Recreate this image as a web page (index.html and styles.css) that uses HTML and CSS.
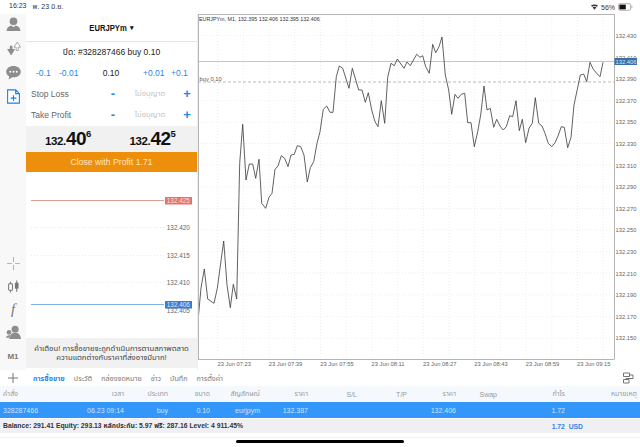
FILE: index.html
```html
<!DOCTYPE html>
<html lang="th">
<head>
<meta charset="utf-8">
<title>EURJPYm</title>
<link rel="stylesheet" href="styles.css">
</head>
<body>
<div class="app">
  <header class="status">
    <div class="status-left"><span>16:23</span><span>พ. 23 มิ.ย.</span></div>
    <div class="status-right">
      <svg class="wifi" viewBox="0 0 10 8" width="7" height="6"><path d="M0 2 Q5 -1 10 2 L8.6 3.6 Q5 1.6 1.4 3.6Z M2.2 4.5 Q5 3 7.800 4.500 L5 8Z" fill="#333"/></svg>
      <span>56%</span>
      <svg class="battery" viewBox="0 0 16 8" width="15" height="8"><rect x=".5" y=".5" width="13" height="7" rx="1.500" fill="#fff" stroke="#aaa"/><rect x="1.500" y="1.500" width="6.800" height="5" fill="#111"/><rect x="14.300" y="2.700" width="1" height="2.600" fill="#aaa"/></svg>
    </div>
  </header>

  <main class="main">
    <nav class="side">
      <div class="side-top">
        <svg class="ico" viewBox="0 0 14 14"><circle cx="7" cy="4" r="3.600" fill="#8d8d8d"/><path d="M.5 13 Q1 8.800 5 8 L7 9.500 L9 8 Q13 8.800 13.500 13Z" fill="#8d8d8d"/></svg>
        <svg class="ico" viewBox="0 0 14 14"><path d="M1 7.500 H3.500 V4.500 H6 V7.500 H8.500 L4.800 13.500Z" fill="#8d8d8d"/><path d="M7.500 5.800 L10.500 1 L13.500 5.800 H11.500 V8.800 H9.500 V5.800Z" fill="#fff" stroke="#9a9a9a" stroke-width=".8"/></svg>
        <svg class="ico" viewBox="0 0 14 14"><path d="M7 1 C10.800 1 13.800 3.200 13.800 6.300 S10.800 11.500 7 11.500 L5.800 11.500 L2.500 13.500 L3 10.600 C1.200 9.700 .2 8.100 .2 6.300 C.2 3.200 3.200 1 7 1Z" fill="#8d8d8d"/><circle cx="4" cy="6.300" r=".9" fill="#fff"/><circle cx="7" cy="6.300" r=".9" fill="#fff"/><circle cx="10" cy="6.300" r=".9" fill="#fff"/></svg>
        <svg class="ico" viewBox="0 0 14 14"><path d="M1.500 .8 H9 L12.500 4.300 V13.200 H1.500Z M9 .8 V4.300 H12.500" fill="#fff" stroke="#1c7fe6" stroke-width="1"/><path d="M7 5.800 V11.200 M4.300 8.500 H9.700" stroke="#1c7fe6" stroke-width="1"/></svg>
      </div>
      <div class="side-bottom">
        <svg class="ico" viewBox="0 0 14 14"><path d="M7 1 V5.500 M7 8.500 V13 M1 7 H5.500 M8.500 7 H13" stroke="#b4b4b4" stroke-width="1"/></svg>
        <svg class="ico" viewBox="0 0 14 14"><rect x="2.500" y="4.500" width="3.500" height="6" rx=".8" fill="#fff" stroke="#777"/><path d="M4.200 2.500 V4.500 M4.200 10.500 V12.500 M10 1.500 V12" stroke="#777"/><rect x="8.300" y="3.500" width="3.400" height="5.500" fill="#777"/></svg>
        <span class="ico-f">f</span>
        <svg class="ico" viewBox="0 0 14 14"><circle cx="8.500" cy="4" r="3.300" fill="#8d8d8d"/><path d="M3 13 Q3.500 8.500 6.500 7.500 H10.500 Q13.500 8.500 14 13Z" fill="#8d8d8d"/><circle cx="2.800" cy="6.800" r="2.200" fill="#8d8d8d"/><path d="M0 12 Q.2 9.800 2.500 9.500 H4 L3 12Z" fill="#8d8d8d"/></svg>
        <span class="ico-m">M1</span>
      </div>
    </nav>

    <section class="panel">
      <div class="panel-title"><span class="title-text">EURJPYm</span> <span class="caret">▾</span></div>
      <div class="panel-close">ปิด: #328287466 buy 0.10</div>
      <div class="steps">
        <span class="step">-0.1</span>
        <span class="step">-0.01</span>
        <span class="vol">0.10</span>
        <span class="step">+0.01</span>
        <span class="step">+0.1</span>
      </div>
      <div class="level"><span class="level-name">Stop Loss</span><span class="adj">-</span><span class="level-val">ไม่อนุญาต</span><span class="adj">+</span></div>
      <div class="level"><span class="level-name">Take Profit</span><span class="adj">-</span><span class="level-val">ไม่อนุญาต</span><span class="adj">+</span></div>
      <div class="quotes">
        <div class="quote">132.<b>40</b><sup>6</sup></div>
        <div class="quote">132.<b>42</b><sup>5</sup></div>
      </div>
      <button class="close-btn">Close with Profit 1.71</button>
      <svg class="mini" viewBox="26 172 171 166">
        <path class="mini-grid" d="M31 227.500H164 M31 255.500H164 M31 282.500H164"/>
        <path d="M31 200.500H164" stroke="#d9a090" stroke-width="1"/>
        <path d="M31 304.500H164" stroke="#7fb0e8" stroke-width="1"/>
        <rect x="165" y="197" width="27" height="7.500" fill="#e5736a"/>
        <text class="mini-tag" x="166.800" y="203">132.425</text>
        <text class="mini-lbl" x="166.800" y="230.200">132.420</text>
        <text class="mini-lbl" x="166.800" y="258.200">132.415</text>
        <text class="mini-lbl" x="166.800" y="285.200">132.410</text>
        <text class="mini-lbl" x="166.800" y="312.700">132.405</text>
        <rect x="165" y="301" width="27" height="7.500" fill="#2f7fdc"/>
        <text class="mini-tag" x="166.800" y="307">132.406</text>
      </svg>
      <div class="warn">คำเตือน! การซื้อขายจะถูกดำเนินการตามสภาพตลาด<br>ความแตกต่างกับราคาที่ส่งอาจมีมาก!</div>
    </section>

    <svg class="chart" viewBox="198 14 442 356">
      <path class="grid" d="M217.700 14V359 M243.400 14V359 M269.100 14V359 M294.800 14V359 M320.500 14V359 M346.200 14V359 M371.900 14V359 M397.600 14V359 M423.300 14V359 M449 14V359 M474.700 14V359 M500.400 14V359 M526.100 14V359 M551.800 14V359 M577.500 14V359 M603.200 14V359
      M198 35.500H614 M198 100.500H614 M198 122H614 M198 143.500H614 M198 165H614 M198 187H614 M198 208.500H614 M198 230H614 M198 252H614 M198 273H614 M198 295H614 M198 316.500H614 M198 338H614"/>
      <path d="M198 61.500H614" stroke="#c4c4c4" stroke-width="1"/>
      <path d="M198 82H614" stroke="#aaa" stroke-width=".8" stroke-dasharray="3 2"/>
      <polyline class="price" points="198.300,317.700 201,288 204.300,269 207.700,299 214,303.300 217.300,288.300 223.700,241 227,285 230.300,307.700 233.300,284.300 236.700,299 239.700,163.300 242.700,124.300 246,180 249.300,164 252.700,164 255.700,178.300 259,159.300 261.700,203.300 265.700,208.300 269,197.300 272,193.300 275,169.300 278,166 281.300,155.700 284.700,158.300 288,166.700 291,155 294.300,154.300 297.300,145.700 300.700,146.700 304,155 307.300,182 310.300,167.700 313.700,161.700 317,143.300 320,131.700 323.300,109.300 326.700,106 330,112.300 333,112.300 336.300,76.700 339.300,66 342.700,68.300 349,88.300 352.300,68.300 358.700,90 362,90 365.300,102.300 368.300,92.700 371.700,110 375,121.700 378,126.700 381.300,100.700 384.700,123.300 387.700,77.300 391,63.300 394.300,65.700 397.300,59 404,68.300 407,62 410.300,65.700 416.700,54.300 420,57.300 422.700,55.700 425.700,66.700 429.300,73.300 432.700,44.300 435.700,52.700 439,46.700 442,37 445.300,75 448.700,90 451.700,114.300 455,94.300 458,98.300 461.300,94.300 464.700,93.300 467.700,122.700 471,122.700 474.300,146.700 477.700,131.700 480.700,115 484,86 487,110 490.300,108.300 493.700,127.300 496.700,119.300 500,126 503.300,130 506.300,126.700 509.700,115.700 512.700,116.700 516,100.700 519.300,130.700 522.300,119.300 525.700,142.700 529,128.300 532.300,123.300 535.300,97.700 538.700,123.300 542,126 545,133.300 548.300,143.300 551.700,146.700 555,142.700 558,136 561.300,126.700 564.300,127.300 567.700,147.700 571,137.300 574,105 577.300,89.300 580.300,75 583.700,74 586.700,81.700 590,62.300 593.300,69.300 596.700,73.300 600,76.700 603,62.300"/>
      <path d="M198.500 14V359 M198 14.500H614.500 M614.500 14V359 M198 359.500H614.500" stroke="#b4b4b4" stroke-width="1" fill="none"/>
      <text class="chart-title" x="199" y="20.500">EURJPYm, M1, 132.395 132.406 132.395 132.406</text>
      <text class="chart-buy" x="199.500" y="81">buy 0.10</text>
      <text class="axis" x="615.500" y="38">132.430</text>
      <text class="axis" x="615.500" y="59.500">132.410</text>
      <text class="axis" x="615.500" y="81">132.390</text>
      <text class="axis" x="615.500" y="102.700">132.370</text>
      <text class="axis" x="615.500" y="124.300">132.350</text>
      <text class="axis" x="615.500" y="146">132.330</text>
      <text class="axis" x="615.500" y="167.500">132.310</text>
      <text class="axis" x="615.500" y="189.200">132.290</text>
      <text class="axis" x="615.500" y="210.800">132.270</text>
      <text class="axis" x="615.500" y="232.400">132.250</text>
      <text class="axis" x="615.500" y="254">132.230</text>
      <text class="axis" x="615.500" y="275.500">132.210</text>
      <text class="axis" x="615.500" y="297">132.190</text>
      <text class="axis" x="615.500" y="318.700">132.170</text>
      <text class="axis" x="615.500" y="340.300">132.150</text>
      <rect x="614.500" y="58" width="22.500" height="7" fill="#3a6ea8"/>
      <text class="axis-tag" x="615.500" y="64">132.406</text>
      <text class="time" x="217.500" y="365.500">23 Jun 07:23</text>
      <text class="time" x="268.800" y="365.500">23 Jun 07:39</text>
      <text class="time" x="320.200" y="365.500">23 Jun 07:55</text>
      <text class="time" x="371.500" y="365.500">23 Jun 08:11</text>
      <text class="time" x="423" y="365.500">23 Jun 08:27</text>
      <text class="time" x="474.300" y="365.500">23 Jun 08:43</text>
      <text class="time" x="525.700" y="365.500">23 Jun 08:59</text>
      <text class="time" x="577" y="365.500">23 Jun 09:15</text>
    </svg>
  </main>

  <div class="toolbar">
    <svg class="tool-plus" viewBox="0 0 12 12" width="12" height="12"><path d="M6 1V11 M1 6H11" stroke="#777" stroke-width="1"/></svg>
    <div class="tabs">
      <span class="tab active">การซื้อขาย</span>
      <span class="tab">ประวัติ</span>
      <span class="tab">กล่องจดหมาย</span>
      <span class="tab">ข่าว</span>
      <span class="tab">บันทึก</span>
      <span class="tab">การตั้งค่า</span>
    </div>
    <svg class="tool-split" viewBox="0 0 12 12" width="12" height="12"><path d="M1.500 1H7.500V4.500H1.500Z M1.500 7.500H7V11H1.500Z M7.500 3H11V6.500H4V7.500" fill="none" stroke="#666" stroke-width=".9"/></svg>
  </div>

  <div class="row head">
    <span class="left">คำสั่ง</span><span>เวลา</span><span>ประเภท</span><span>ขนาด</span><span>สัญลักษณ์</span><span>ราคา</span><span>S/L</span><span>T/P</span><span>ราคา</span><span>Swap</span><span>กำไร</span><span>หมายเหตุ</span>
  </div>
  <div class="row trade">
    <span class="left">328287466</span><span>06.23 09:14</span><span>buy</span><span>0.10</span><span>eurjpym</span><span>132.387</span><span></span><span></span><span>132.406</span><span></span><span>1.72</span><span></span>
  </div>
  <div class="balance">
    <span>Balance: 291.41 Equity: 293.13 หลักประกัน: 5.97 ฟรี: 287.16 Level: 4 911.45%</span>
    <span class="total">1.72&nbsp; USD</span>
  </div>
  <div class="home"><div class="home-bar"></div></div>
</div>
</body>
</html>
```
FILE: styles.css
```css
* { box-sizing: border-box; }
html, body { margin: 0; padding: 0; background: #fff; }
body { font-family: "Liberation Sans", "Noto Sans Thai", "Noto Sans", sans-serif; overflow: hidden; }
.app { width: 640px; height: 447px; display: flex; flex-direction: column; }

.status { height: 14px; display: flex; justify-content: space-between; align-items: center; padding: 0 7px 0 9px; font-size: 7px; color: #333; }
.status-left { display: flex; gap: 6px; }
.status-right { display: flex; align-items: center; gap: 3px; }

.main { height: 356px; display: grid; grid-template-columns: 26px 172px 442px; }
.side { background: #f8f8f8; display: flex; flex-direction: column; justify-content: space-between; align-items: center; padding: 3px 0 7px; }
.side-top, .side-bottom { display: flex; flex-direction: column; align-items: center; }
.side-top { gap: 9px; }
.side-bottom { gap: 8px; }
.ico { width: 15px; height: 15px; display: block; }
.ico-f { font: italic 15px/15px "Liberation Serif", serif; color: #777; height: 15px; }
.ico-m { font-size: 8px; line-height: 12px; font-weight: 700; color: #777; margin-top: 3px; }

.panel { background: #fff; display: flex; flex-direction: column; height: 356px; border-right: 1px solid #eee; }
.panel-title { height: 28px; border-bottom: 1px solid #e4e4e4; display: flex; justify-content: center; align-items: center; padding-right: 3px; font-size: 9px; font-weight: 700; color: #111; }
.title-text { display: inline-block; transform: scaleX(.85); }
.caret { font-size: 7px; margin-left: -1px; }
.panel-close { height: 20px; display: flex; align-items: center; justify-content: center; font-size: 8.500px; color: #222; }
.steps { height: 21px; display: grid; grid-template-columns: 23px 25px 59px 28px 18px; padding-left: 10px; align-items: center; font-size: 8.500px; }
.step { color: #2c84e8; }
.vol { color: #222; text-align: center; padding-right: 5px; }
.level { height: 21px; display: grid; grid-template-columns: 75px 14px 60px 14px; padding-left: 5px; align-items: center; font-size: 8.500px; color: #666; }
.adj { color: #2c84e8; font-size: 13px; font-weight: 700; text-align: center; line-height: 1; }
.level-val { text-align: center; color: #c4c4c4; font-size: 7.500px; }
.quotes { height: 26px; margin-top: 1px; background: #f1f1f1; display: grid; grid-template-columns: 84px 85px; align-items: center; justify-items: center; font-weight: 700; font-size: 11.500px; color: #111; letter-spacing: -.4px; }
.quote { display: flex; align-items: flex-start; line-height: 26px; white-space: nowrap; padding-top: 2px; }
.quote b { font-size: 19px; line-height: 22px; letter-spacing: -.5px; }
.quote sup { font-size: 9.500px; line-height: 12px; }
.close-btn { height: 20px; border: 0; background: #ee8f0b; color: #fbe6c8; padding: 0; font: 8.700px "Liberation Sans", sans-serif; flex: none; }
.mini { width: 171px; height: 166px; display: block; flex: none; }
.mini-grid { stroke: #e2e2e2; stroke-width: .7; stroke-dasharray: 1 2; fill: none; }
.mini-lbl { font-size: 6.400px; fill: #666; }
.mini-tag { font-size: 6.400px; fill: #f8e2df; }
.warn { height: 30px; background: #f1f1f1; text-align: center; font-size: 7.700px; line-height: 9px; color: #444; padding-top: 6px; white-space: nowrap; overflow: hidden; }

.chart { width: 442px; height: 356px; display: block; }
.grid { stroke: #e6e6e6; stroke-width: .7; stroke-dasharray: 1 2; fill: none; }
.price { fill: none; stroke: #3a3a3a; stroke-width: .8; }
.chart-title { font-size: 5.350px; fill: #333; }
.chart-buy { font-size: 5.800px; fill: #555; }
.axis { font-size: 5.800px; fill: #666; }
.axis-tag { font-size: 5.800px; fill: #dce6f2; }
.time { font-size: 5.800px; fill: #666; }

.toolbar { height: 16px; display: flex; align-items: center; padding: 0 6px 0 7px; }
.tabs { display: flex; gap: 9px; margin-left: 14px; flex: 1; font-size: 7.200px; color: #777; }
.tab.active { color: #2c84e8; font-weight: 700; }

.row { display: grid; grid-template-columns: 77px 44px 44px 42px 50px 48px 49px 50px 49px 41px 68px 72px; padding-left: 3px; width: 640px; padding-right: 3px; align-items: center; text-align: right; font-size: 7px; }
.left { text-align: left; }
.head { height: 16px; background: #f5f9fd; color: #999; }
.trade { height: 16px; background: #3396fa; color: #cfe4fb; }
.balance { margin-top: 1px; height: 14px; background: #f0f0f4; display: flex; align-items: center; justify-content: space-between; padding: 0 57px 0 3px; font-size: 6.800px; font-weight: 700; color: #333; white-space: nowrap; }
.total { color: #2c84e8; }
.home { flex: 1; margin-top: 4px; border-top: 1px solid #f2f2f2; display: flex; justify-content: center; padding-top: 2px; }
.home-bar { width: 168px; height: 3px; border-radius: 2px; background: #000; }
```
